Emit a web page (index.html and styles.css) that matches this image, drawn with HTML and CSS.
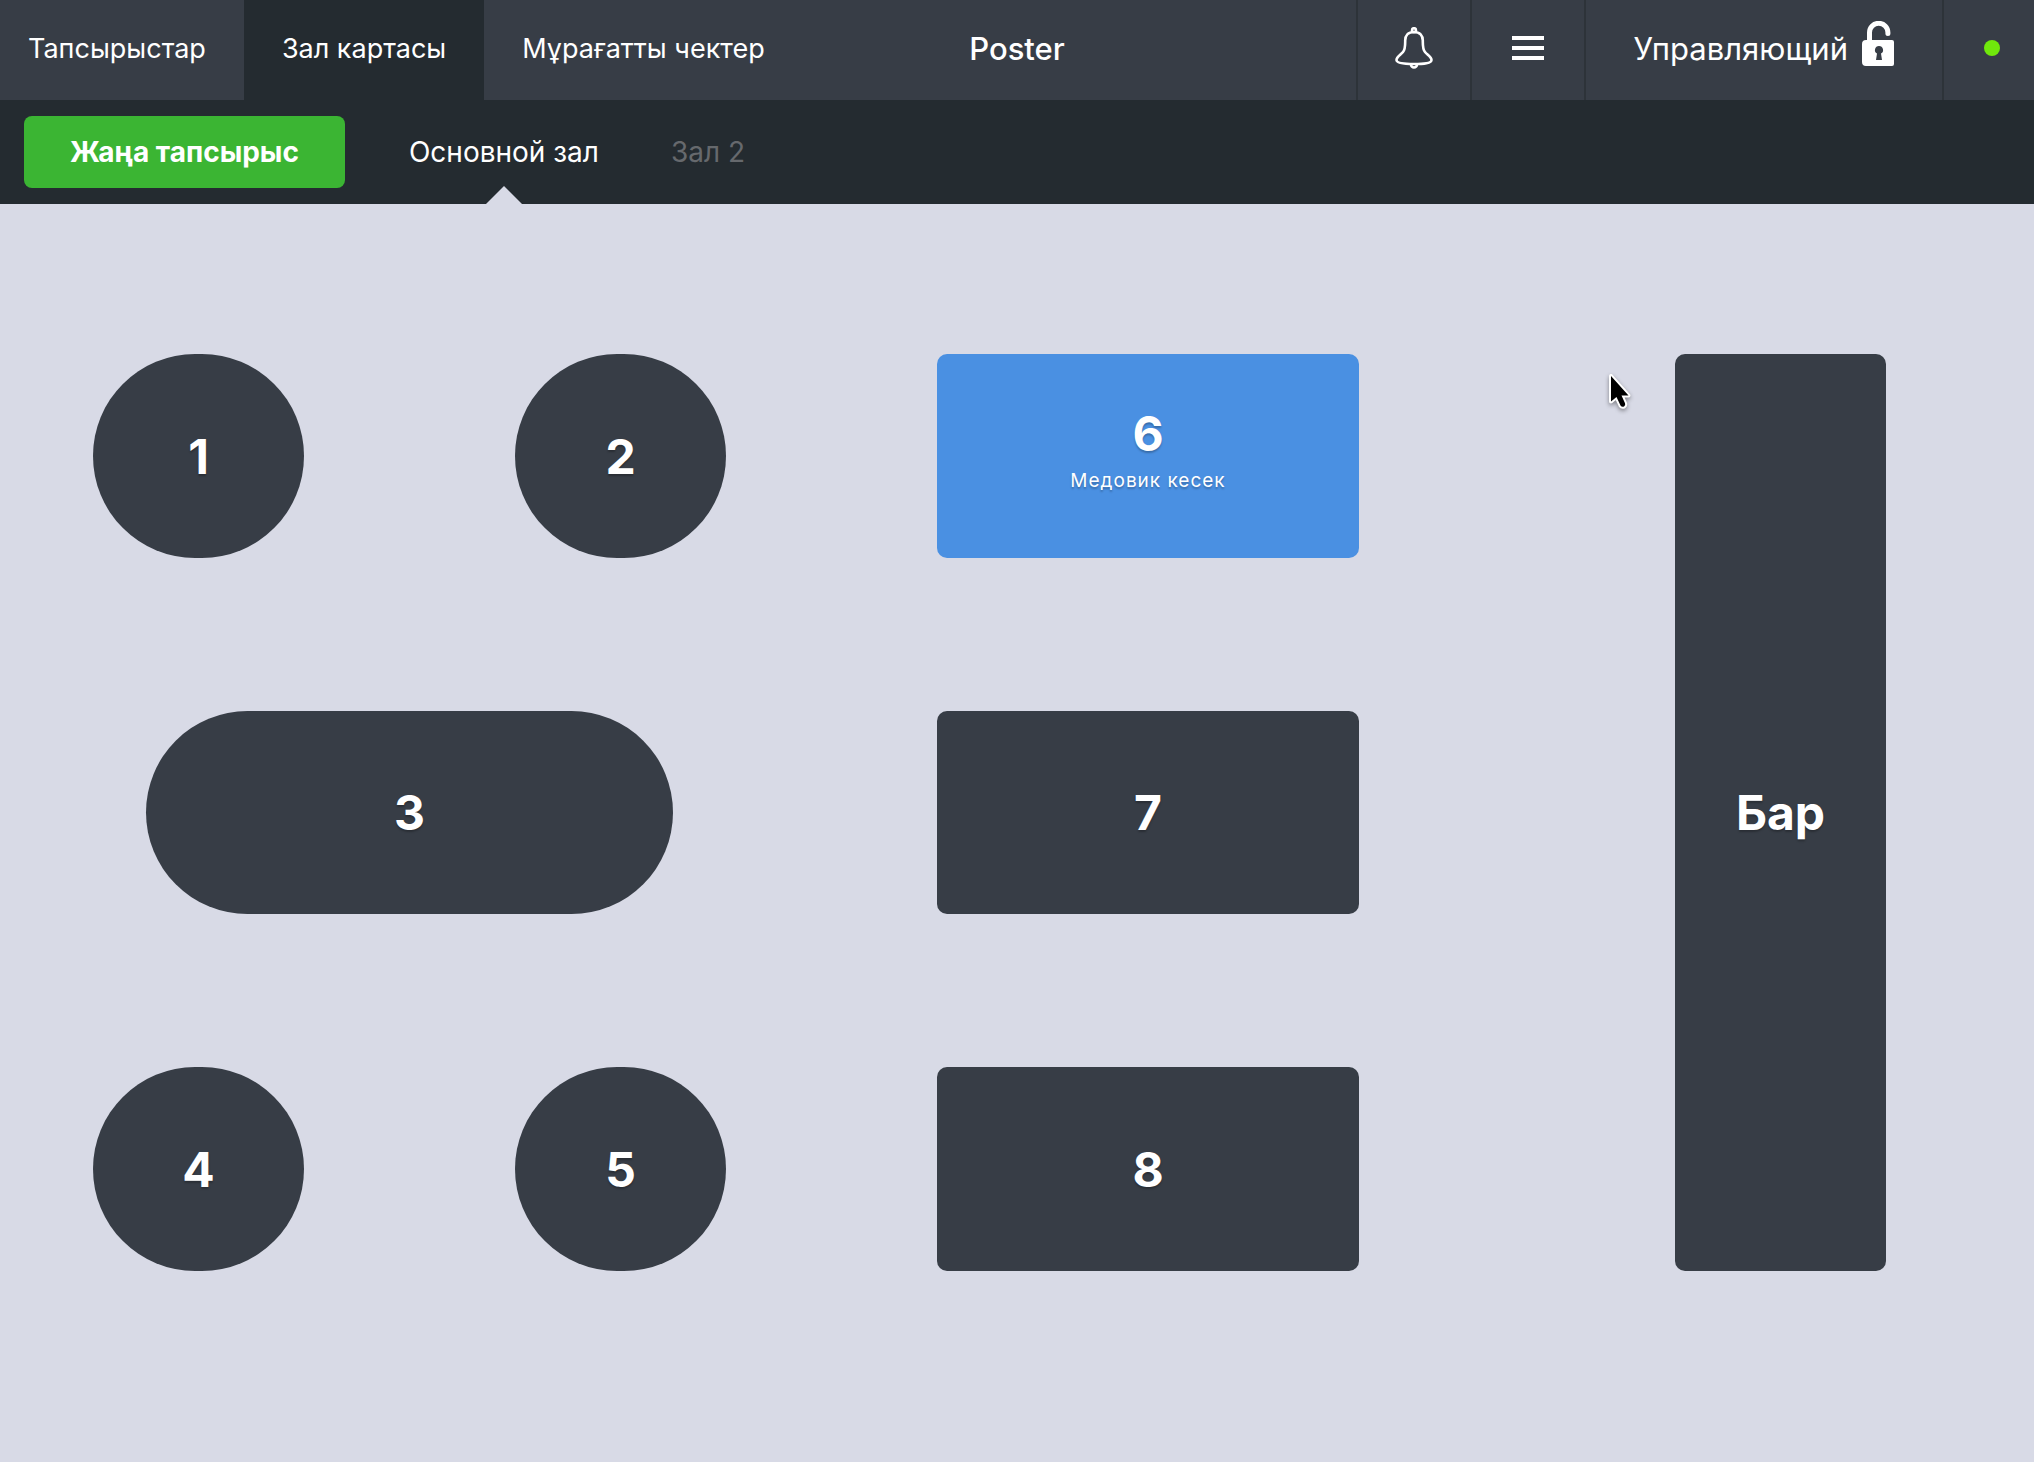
FILE: index.html
```html
<!DOCTYPE html>
<html lang="kk">
<head>
    <meta charset="UTF-8">
    <meta name="viewport" content="width=device-width, initial-scale=1.0">
    <title>Poster</title>
    <link rel="stylesheet" href="styles.css">
</head>
<body>
    <header class="topbar">
        <nav class="tabs">
            <a href="#orders" class="tab">Тапсырыстар</a>
            <a href="#hall" class="tab active">Зал картасы</a>
            <a href="#archive" class="tab">Мұрағатты чектер</a>
        </nav>
        <h1 class="brand">Poster</h1>
        <div class="tools">
            <button class="tool" aria-label="Notifications">
                <svg width="38" height="42" viewBox="0 0 38 42" fill="none" stroke="#fff" stroke-width="2.6">
                    <path d="M19 5C13 5 10.200 8.500 10.200 13.500C10.200 19 10.400 22 8 25C5.500 28 1.500 30 1.500 33C1.500 36 9 37 19 37S36.500 36 36.500 33C36.500 30 32.500 28 30 25C27.600 22 27.800 19 27.800 13.500C27.800 8.500 25 5 19 5Z"/>
                    <circle cx="19" cy="3.200" r="2"/>
                    <path d="M16 37.500a3 3 0 0 0 6 0"/>
                </svg>
            </button>
            <button class="tool" aria-label="Menu">
                <svg width="32" height="24" viewBox="0 0 32 24" fill="#fff">
                    <path d="M0 0h32v4H0zM0 10h32v4H0zM0 20h32v4H0z"/>
                </svg>
            </button>
            <button class="tool user">
                <span>Управляющий</span>
                <svg class="lock" width="32" height="45" viewBox="0 0 32 45">
                    <path d="M7.500 20V11.500a9.200 9.200 0 0 1 18.400 0V12.500" fill="none" stroke="#fff" stroke-width="5" stroke-linecap="round"/>
                    <path fill="#fff" fill-rule="evenodd" d="M4 19h26a2 2 0 0 1 2 2v22a2 2 0 0 1-2 2H4a4 4 0 0 1-4-4V23a4 4 0 0 1 4-4ZM17 25a4 4 0 0 0-2 7.500L14 39h6l-1-6.500A4 4 0 0 0 17 25Z"/>
                </svg>
            </button>
            <div class="tool status"><span class="dot"></span></div>
        </div>
    </header>

    <div class="subbar">
        <button class="new-order">Жаңа тапсырыс</button>
        <nav class="halls">
            <a href="#hall-1" class="hall-link active">Основной зал</a>
            <a href="#hall-2" class="hall-link">Зал 2</a>
        </nav>
    </div>

    <main class="hall-map">
        <button class="table round t1">1</button>
        <button class="table round t2">2</button>
        <button class="table round t3">3</button>
        <button class="table round t4">4</button>
        <button class="table round t5">5</button>
        <button class="table busy t6">6<span class="order">Медовик кесек</span></button>
        <button class="table t7">7</button>
        <button class="table t8">8</button>
        <button class="table bar">Бар</button>
        <svg class="cursor" width="32" height="44" viewBox="0 0 32 44">
            <path d="M4 4V29.500L9.500 25L13.500 33.500Q14.800 35.300 17 34.500Q18.800 33.300 18 31.300L14.500 23.500H21.500Z" stroke="#fff" stroke-width="4" stroke-linejoin="round" paint-order="stroke"/>
        </svg>
    </main>
</body>
</html>
```

FILE: styles.css
```css
* {
    margin: 0;
    padding: 0;
    box-sizing: border-box;
    font-family: 'Inter', sans-serif;
}

body {
    min-height: 100vh;
    display: flex;
    flex-direction: column;
    background: #d8dae6;
    color: #fff;
    font-size: 28px;
}

a {
    color: inherit;
    text-decoration: none;
}

button {
    border: none;
    background: none;
    color: inherit;
    font-size: inherit;
    cursor: pointer;
}

.topbar {
    display: grid;
    grid-template-columns: 1fr auto 1fr;
    height: 100px;
    background: #373d46;
}

.tabs,
.tools {
    display: flex;
}

.tab {
    display: flex;
    align-items: center;
    padding: 0 38px 4px;
    font-size: 27px;
    white-space: nowrap;
}

.tab:first-child {
    padding-left: 28px;
}

.tab.active {
    background: #242b30;
}

.brand {
    align-self: center;
    padding-bottom: 4px;
    font-size: 31px;
    font-weight: 500;
}

.tools {
    justify-content: flex-end;
}

.tool {
    display: flex;
    align-items: center;
    justify-content: center;
    width: 114px;
    padding-bottom: 4px;
    border-left: 2px solid #2d3339;
}

.user {
    gap: 14px;
    width: auto;
    padding: 0 48px 4px;
    font-size: 31px;
}

.lock {
    margin-bottom: 10px;
}

.status {
    width: 92px;
    padding-left: 6px;
}

.dot {
    width: 16px;
    height: 16px;
    border-radius: 50%;
    background: #70e80c;
}

.subbar {
    display: flex;
    align-items: center;
    gap: 28px;
    height: 104px;
    padding-left: 24px;
    background: #242b30;
}

.new-order {
    height: 72px;
    padding: 0 46px;
    border-radius: 8px;
    background: #3bb533;
    font-weight: 700;
}

.halls {
    display: flex;
    align-self: stretch;
}

.hall-link {
    position: relative;
    display: flex;
    align-items: center;
    padding: 0 36px;
    color: #66696d;
}

.hall-link.active {
    color: #fff;
}

.hall-link.active::after {
    content: '';
    position: absolute;
    bottom: 0;
    left: 50%;
    margin-left: -18px;
    border: 18px solid transparent;
    border-top: none;
    border-bottom-color: #d8dae6;
}

/* tracks follow the proportions of the floor plan */
.hall-map {
    position: relative;
    flex: 1;
    display: grid;
    grid-template-columns: 93fr 53fr 158fr 211fr 158fr 53fr 211fr 422fr 316fr 211fr 148fr;
    grid-template-rows: 150fr 204fr 153fr 203fr 153fr 204fr 191fr;
}

.table {
    display: flex;
    flex-direction: column;
    align-items: center;
    justify-content: center;
    border-radius: 10px;
    background: #373d46;
    font-size: 48px;
    font-weight: 700;
    text-shadow: 0 2px 2px rgba(0, 0, 0, 0.25);
}

.round {
    border-radius: 999px;
}

.busy {
    background: #4a90e2;
}

.order {
    margin-bottom: 10px;
    font-size: 19px;
    font-weight: 400;
    letter-spacing: 1px;
    line-height: 36px;
}

.t1 { grid-area: 2 / 2 / 3 / 4; }
.t2 { grid-area: 2 / 5 / 3 / 7; }
.t3 { grid-area: 4 / 3 / 5 / 6; }
.t4 { grid-area: 6 / 2 / 7 / 4; }
.t5 { grid-area: 6 / 5 / 7 / 7; }
.t6 { grid-area: 2 / 8 / 3 / 9; }
.t7 { grid-area: 4 / 8 / 5 / 9; }
.t8 { grid-area: 6 / 8 / 7 / 9; }
.bar { grid-area: 2 / 10 / 7 / 11; }

.cursor {
    position: absolute;
    left: 79%;
    top: 168px;
    filter: drop-shadow(0 2px 2px rgba(0, 0, 0, 0.4));
}
```
